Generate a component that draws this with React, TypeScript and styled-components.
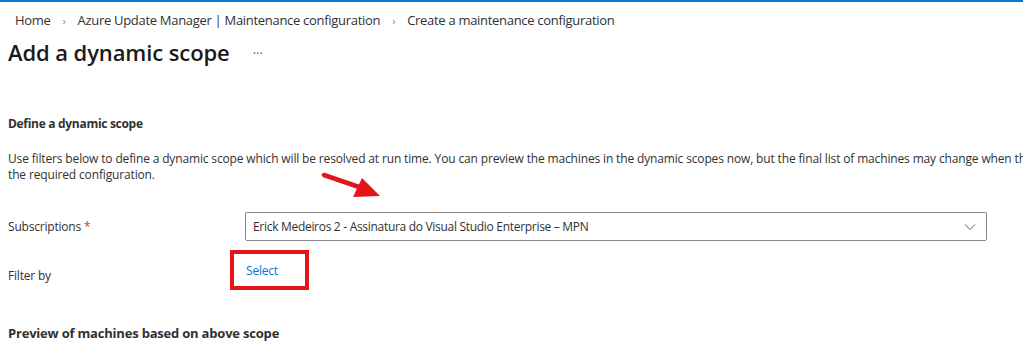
import styled, { createGlobalStyle } from "styled-components"

const Global = createGlobalStyle`
  html, body { margin: 0; padding: 0; background: #fff; }
  body { font-family: "Open Sans", "Noto Sans", sans-serif; color: #323130; }
`;

const Page = styled.div`
  position: relative;
  width: 1023px;
  height: 358px;
  overflow: hidden;
  border-top: 2px solid #0078d4;
  box-sizing: border-box;
`;

const Breadcrumb = styled.nav`
  display: flex;
  align-items: center;
  gap: 12px;
  padding: 9px 0 0 15px;
  height: 18px;
  font-size: 13px;
  color: #323130;
  letter-spacing: -0.3px;
`;

const Chevron = styled.span`
  color: #8a8886;
  font-size: 11px;
`;

const Header = styled.div`
  display: flex;
  align-items: center;
  gap: 23px;
  padding: 7px 0 0 8px;
  height: 32px;
`;

const Title = styled.h1`
  margin: 0;
  font-size: 22px;
  font-weight: 600;
  color: #1b1a19;
  letter-spacing: -0.1px;
`;

const More = styled.span`
  font-size: 13px;
  color: #605e5c;
  padding-top: 2px;
`;

const Content = styled.div`
  padding: 47px 0 0 8px;
`;

const SectionTitle = styled.h2`
  margin: 0;
  font-size: 12px;
  font-weight: 700;
  color: #323130;
  letter-spacing: -0.3px;
`;

const Description = styled.p`
  margin: 19px 0 0;
  white-space: nowrap;
  font-size: 12px;
  line-height: 16px;
  color: #323130;
  letter-spacing: -0.15px;
`;

const Row = styled.div<{ $top: number }>`
  display: grid;
  grid-template-columns: 237px 742px;
  align-items: center;
  margin-top: ${p => p.$top}px;
`;

const Label = styled.label<{ $offset?: number }>`
  padding-top: ${p => p.$offset ?? 0}px;
  font-size: 12px;
  color: #323130;
  letter-spacing: -0.2px;
`;

const Required = styled.span`
  color: #d13438;
  margin-left: 3px;
`;

const Dropdown = styled.div`
  display: flex;
  align-items: center;
  justify-content: space-between;
  height: 29px;
  box-sizing: border-box;
  border: 1px solid #8a8886;
  border-radius: 2px;
  padding: 0 10px 0 7px;
  font-size: 12px;
  color: #323130;
  letter-spacing: -0.3px;
`;

const LinkBox = styled.div`
  display: flex;
  align-items: center;
  width: 79px;
  height: 40px;
  box-sizing: border-box;
  margin-left: -15px;
  border: 4px solid #e3151b;
  padding: 0 0 0 12px;
`;

const Link = styled.a`
  font-size: 12px;
  color: #0078d4;
  text-decoration: none;
  letter-spacing: -0.2px;
`;

const PreviewTitle = styled(SectionTitle)`
  margin-top: 34px;
  font-size: 13px;
  letter-spacing: -0.2px;
`;

const Arrow = styled.svg`
  position: absolute;
  left: 318px;
  top: 166px;
`;

function App() {
  return (
    <Page>
      <Global />
      <Breadcrumb>
        <span>Home</span>
        <Chevron>›</Chevron>
        <span>Azure Update Manager | Maintenance configuration</span>
        <Chevron>›</Chevron>
        <span>Create a maintenance configuration</span>
      </Breadcrumb>
      <Header>
        <Title>Add a dynamic scope</Title>
        <More>···</More>
      </Header>
      <Content>
        <SectionTitle>Define a dynamic scope</SectionTitle>
        <Description>
          Use filters below to define a dynamic scope which will be resolved at run time. You can preview the machines in the dynamic scopes now, but the final list of machines may change when the scope is evaluated against
          <br />
          the required configuration.
        </Description>
        <Row $top={29}>
          <Label>Subscriptions<Required>*</Required></Label>
          <Dropdown>
            <span>Erick Medeiros 2 - Assinatura do Visual Studio Enterprise – MPN</span>
            <svg width="12" height="8" viewBox="0 0 12 8">
              <path d="M1 1.5 L6 6.5 L11 1.5" fill="none" stroke="#605e5c" strokeWidth="1" />
            </svg>
          </Dropdown>
        </Row>
        <Row $top={9}>
          <Label $offset={10}>Filter by</Label>
          <LinkBox>
            <Link href="#">Select</Link>
          </LinkBox>
        </Row>
        <PreviewTitle>Preview of machines based on above scope</PreviewTitle>
      </Content>
      <Arrow width="70" height="34" viewBox="0 0 70 34">
        <line x1="6" y1="7" x2="44" y2="20" stroke="#e3151b" strokeWidth="4.5" strokeLinecap="round" />
        <polygon points="62,28 44,10 35,29" fill="#e3151b" />
      </Arrow>
    </Page>
  )
}

export default App
